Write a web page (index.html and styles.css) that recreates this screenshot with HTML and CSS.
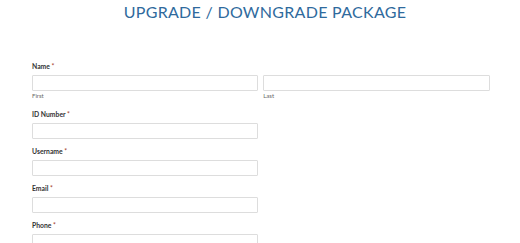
FILE: index.html
```html
<!DOCTYPE html>
<html>
<head>
<meta charset="utf-8">
<link rel="stylesheet" href="styles.css">
</head>
<body>
<div class="page">
  <h1 class="title">UPGRADE / DOWNGRADE PACKAGE</h1>
  <form class="form">
    <div class="field field-name">
      <div class="label">Name <span class="req">*</span></div>
      <div class="name-row">
        <div class="sub">
          <div class="input"></div>
          <div class="sublabel">First</div>
        </div>
        <div class="sub">
          <div class="input"></div>
          <div class="sublabel">Last</div>
        </div>
      </div>
    </div>
    <div class="field">
      <div class="label">ID Number <span class="req">*</span></div>
      <div class="input half"></div>
    </div>
    <div class="field">
      <div class="label">Username <span class="req">*</span></div>
      <div class="input half"></div>
    </div>
    <div class="field">
      <div class="label">Email <span class="req">*</span></div>
      <div class="input half"></div>
    </div>
    <div class="field">
      <div class="label">Phone <span class="req">*</span></div>
      <div class="input half"></div>
    </div>
  </form>
</div>
</body>
</html>
```

FILE: styles.css
```css
html, body {
  margin: 0;
  padding: 0;
  background: #ffffff;
  overflow: hidden;
}
.page {
  width: 520px;
  font-family: Lato, "Open Sans", sans-serif;
}
.title {
  margin: 0;
  padding-top: 2px;
  padding-left: 10px;
  text-align: center;
  font-family: Lato, sans-serif;
  font-weight: 400;
  font-size: 16px;
  line-height: 20px;
  letter-spacing: 0.3px;
  color: #2f6a9d;
}
.form {
  padding: 41px 30px 0 32px;
  display: flex;
  flex-direction: column;
  gap: 9px;
}
.label {
  font-size: 6.8px;
  font-weight: 700;
  line-height: 6px;
  color: #333333;
  margin-bottom: 6px;
}
.req {
  color: #a33a2a;
  font-weight: 400;
}
.input {
  box-sizing: border-box;
  height: 16px;
  border: 1px solid #dddddd;
  border-radius: 1px;
  background: #ffffff;
}
.half {
  width: 226px;
}
.name-row {
  display: flex;
  gap: 5px;
}
.sub {
  width: 226.5px;
}
.sub:last-child {
  width: 227px;
}
.sublabel {
  font-size: 6px;
  line-height: 8px;
  color: #666666;
  padding-top: 1px;
}
.field-name {
  margin-bottom: 2px;
}
```
